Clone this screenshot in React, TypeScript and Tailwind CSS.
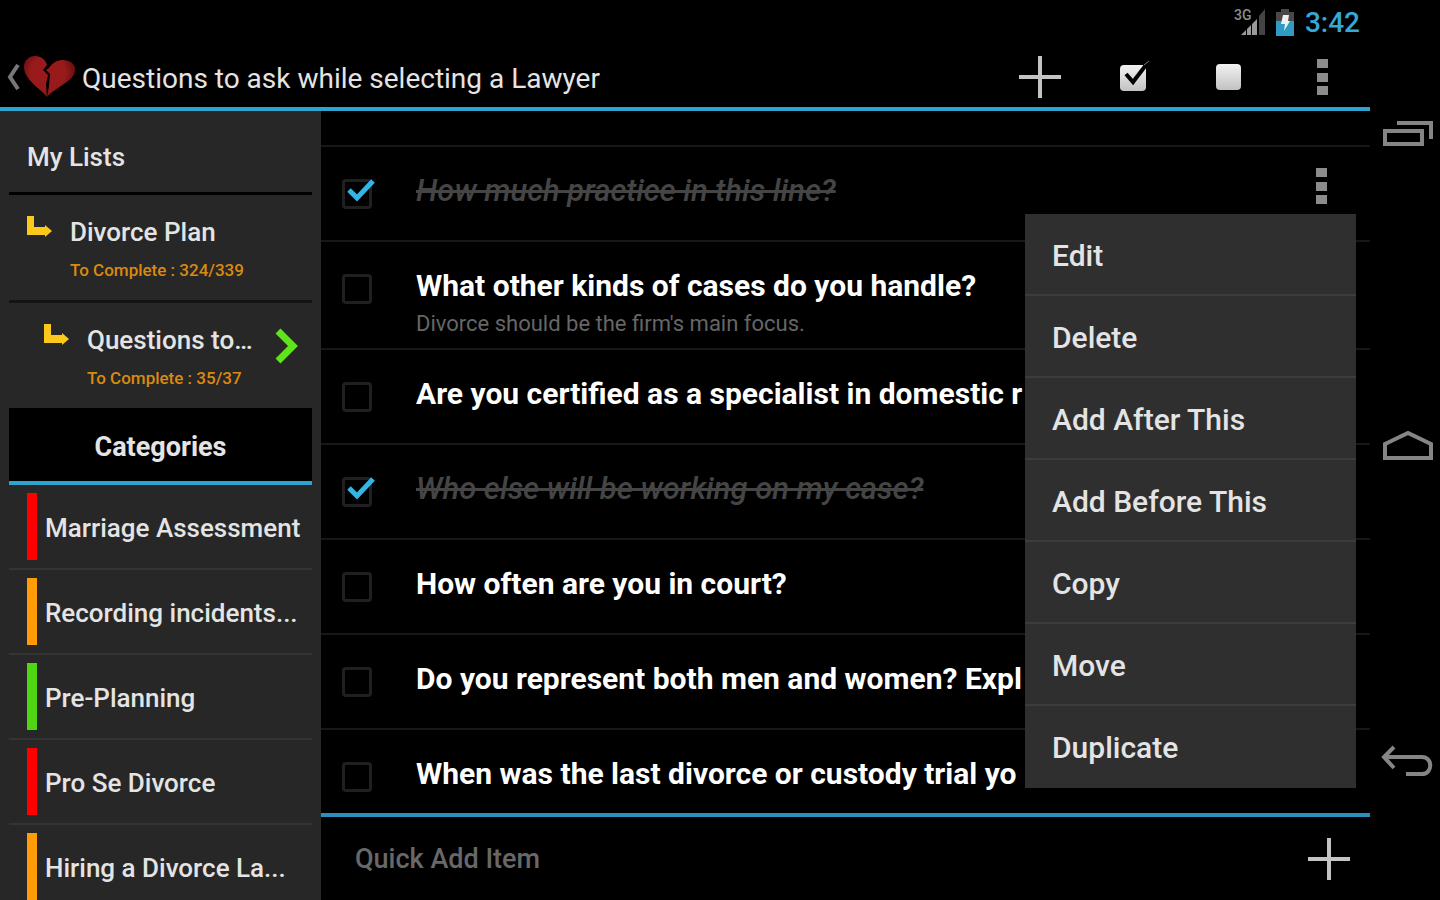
type Item = {
  id: string,
  title: string,
  note?: string,
  done?: boolean,
  menu?: boolean,
}

type Category = {
  name: string,
  color: string,
}

const items: Array<Item> = [
  { id: 'practice', title: 'How much practice in this line?', done: true, menu: true },
  { id: 'kinds', title: 'What other kinds of cases do you handle?', note: 'Divorce should be the firm\'s main focus.' },
  { id: 'certified', title: 'Are you certified as a specialist in domestic r' },
  { id: 'team', title: 'Who else will be working on my case?', done: true },
  { id: 'court', title: 'How often are you in court?' },
  { id: 'represent', title: 'Do you represent both men and women? Expl' },
  { id: 'trial', title: 'When was the last divorce or custody trial yo' },
]

const categories: Array<Category> = [
  { name: 'Marriage Assessment', color: 'bg-[#ff0000]' },
  { name: 'Recording incidents...', color: 'bg-[#ff9c08]' },
  { name: 'Pre-Planning', color: 'bg-[#4fd512]' },
  { name: 'Pro Se Divorce', color: 'bg-[#ff0000]' },
  { name: 'Hiring a Divorce La...', color: 'bg-[#ff9c08]' },
]

const actions = ['Edit', 'Delete', 'Add After This', 'Add Before This', 'Copy', 'Move', 'Duplicate']

const PlusIcon = () => (
  <svg width="42" height="42" viewBox="0 0 42 42" fill="none" stroke="#c4c4c4" strokeWidth="4">
    <path d="M21 0v42M0 21h42" />
  </svg>
)

const MoreIcon = () => (
  <svg width="12" height="38" viewBox="0 0 12 38" fill="#8c8c8c">
    <path d="M0 1h11v9H0zM0 15h11v9H0zM0 28h11v9H0z" />
  </svg>
)

const BackIcon = () => (
  <svg width="14" height="26" viewBox="0 0 14 26" fill="none" stroke="#777" strokeWidth="4">
    <path d="M12 1L4 13l8 12" />
  </svg>
)

const HeartIcon = () => (
  <svg width="52" height="42" viewBox="0 0 52 42">
    <defs>
      <radialGradient id="heart" gradientUnits="userSpaceOnUse" cx="24" cy="17" r="29">
        <stop offset="0.6" stopColor="#981a1b" />
        <stop offset="1" stopColor="#5e0d0f" />
      </radialGradient>
    </defs>
    <path fill="url(#heart)" d="M23 41C17 33 0 24 0 11C0 4 5 0 11 0C17 0 22 4 23 9L19 14L24 19L22 28L23 41Z" />
    <path fill="url(#heart)" d="M23 41L25 30L26 18L22 14L25 12C29 6 34 4 39 4C47 4 52 9 51 15C50 25 32 31 23 41Z" />
  </svg>
)

const CheckAllIcon = () => (
  <svg width="30" height="32" viewBox="0 0 30 32" fill="none">
    <defs>
      <linearGradient id="box" x1="0" y1="0" x2="0" y2="1">
        <stop stopColor="#f2f2f2" />
        <stop offset="1" stopColor="#c2c2c2" />
      </linearGradient>
    </defs>
    <rect x="0" y="4" width="26" height="26" rx="4" fill="url(#box)" />
    <path d="M6 13l7 8L26 4" stroke="#000" strokeWidth="4" />
    <path d="M24 4l5-4" stroke="#777" strokeWidth="1" />
  </svg>
)

const UncheckAllIcon = () => (
  <svg width="25" height="26" viewBox="0 0 25 26">
    <rect width="25" height="26" rx="4" fill="url(#box)" />
  </svg>
)

const BranchIcon = () => (
  <svg width="25" height="22" viewBox="0 0 25 22" fill="#fbc81c">
    <path d="M0 0h7v11h11V9l7 6-7 6v-2H0z" />
  </svg>
)

const ArrowIcon = () => (
  <svg width="24" height="36" viewBox="0 0 24 36" fill="none" stroke="#5fe31b" strokeWidth="7">
    <path d="M3 3l15 15L3 33" />
  </svg>
)

const SignalIcon = () => (
  <svg width="32" height="28" viewBox="0 0 32 28">
    <text x="0" y="12" fill="#8c8c8c" fontSize="14" fontWeight="500" fontFamily="Roboto, sans-serif">3G</text>
    <path fill="#9a9a9a" d="M7 27l5-5v5zM13 21l4-4v10h-4zM18 16l5-5v16h-5z" />
    <path fill="#444" d="M25 8l6-7v26h-6z" />
  </svg>
)

const BatteryIcon = () => (
  <svg width="18" height="27" viewBox="0 0 18 27">
    <path fill="#484848" d="M5 0h8v3h5v10H0V3h5z" />
    <path fill="#2f9ac4" d="M0 12h18v15H0z" />
    <path fill="#f0f0f0" d="M7 6h6l-1 6h2l-6 10 1-7H5z" />
  </svg>
)

const RecentIcon = () => (
  <svg width="50" height="27" viewBox="0 0 50 27" fill="none" stroke="#858585" strokeWidth="4">
    <path d="M2 11h37v13H2z" />
    <path d="M14 3h34v16" />
  </svg>
)

const HomeIcon = () => (
  <svg width="50" height="32" viewBox="0 0 50 32" fill="none" stroke="#858585" strokeWidth="4">
    <path d="M2 14L25 3l23 11v14H2z" />
  </svg>
)

const ReturnIcon = () => (
  <svg width="54" height="34" viewBox="0 0 54 34" fill="none" stroke="#858585" strokeWidth="4">
    <path d="M5 13h38c11 0 11 17 0 17H27" />
    <path d="M15 3L5 13l10 11" />
  </svg>
)

const ActionMenu = () => (
  <ul role="menu" className="absolute top-[67px] right-[14px] z-10 w-[331px] bg-[#2f2f2f]">
    {actions.map((action) => (
      <li key={action} role="none" className="border-b-2 border-[#3c3c3c] last:border-transparent">
        <button type="button" role="menuitem" className="flex h-[80px] w-full items-center px-[27px] pt-[2px] text-left text-[30px]">{action}</button>
      </li>
    ))}
  </ul>
)

const ListItem = ({ id, title, note, done, menu }: Item) => (
  <li className={`relative flex items-start border-b-2 border-[#171717] pr-[42px] pl-[21px] ${note ? 'h-[108px]' : 'h-[95px]'}`}>
    <div className="relative mt-8 h-[30px] w-[30px] shrink-0">
      <input id={id} type="checkbox" defaultChecked={done} className="peer block h-[30px] w-[30px] appearance-none rounded-sm border-[3px] border-[#202020]" />
      <svg className="pointer-events-none absolute top-0 left-[5px] hidden peer-checked:block" width="28" height="24" viewBox="0 0 28 24" fill="none" stroke="#35b5e5" strokeWidth="5">
        <path d="M2 11l8 8L26 2" />
      </svg>
    </div>
    <div className="ml-11 flex-1 overflow-hidden pt-[26px] whitespace-nowrap">
      <label htmlFor={id} className={`block h-9 leading-9 ${done ? 'text-[31px] text-[#454545] italic line-through' : 'text-[30px] font-bold text-white'}`}>{title}</label>
      {note && <p className="pt-[2px] text-[22px] leading-9 font-normal text-[#666]">{note}</p>}
    </div>
    {menu && (
      <>
        <button type="button" aria-label="Item actions" className="mt-5"><MoreIcon /></button>
        <ActionMenu />
      </>
    )}
  </li>
)

const Sidebar = () => (
  <aside className="w-[321px] shrink-0 overflow-hidden bg-[#272727] pr-[9px] pl-[9px]">
    <h2 className="flex h-[84px] items-center border-b-[3px] border-black px-[18px] pt-3 text-[26px]">My Lists</h2>
    <a href="#plan" className="flex h-[108px] items-start border-b-[3px] border-[#141414] pt-[21px] pl-[18px]">
      <BranchIcon />
      <span className="ml-[18px]">
        <span className="block text-[26px] leading-8">Divorce Plan</span>
        <span className="block pt-[6px] text-[17px] leading-8 text-[#d98a10]">To Complete : 324/339</span>
      </span>
    </a>
    <a href="#questions" className="flex h-[105px] items-start pt-[21px] pl-[35px]">
      <BranchIcon />
      <span className="ml-[18px] flex-1">
        <span className="block text-[26px] leading-8">Questions to…</span>
        <span className="block pt-[6px] text-[17px] leading-8 text-[#d98a10]">To Complete : 35/37</span>
      </span>
      <span className="mt-1 mr-[13px]"><ArrowIcon /></span>
    </a>
    <h2 className="flex h-[77px] items-center justify-center border-b-4 border-[#2fa3d0] bg-black pt-[6px] text-[27px] font-bold">Categories</h2>
    <ul>
      {categories.map(({ name, color }) => (
        <li key={name} className="border-b-2 border-[#343434]">
          <a href="#category" className="flex h-[83px] items-center pl-[18px]">
            <span className={`h-[67px] w-[10px] ${color}`} />
            <span className="pt-1 pl-2 text-[26px] whitespace-nowrap">{name}</span>
          </a>
        </li>
      ))}
    </ul>
  </aside>
)

const App = () => (
  <div className="flex h-screen overflow-hidden bg-black font-[Roboto,sans-serif] font-medium text-[#e4e4e4]">
    <div className="flex min-w-0 flex-1 flex-col">
      <div className="flex h-11 items-center justify-end pr-[10px]">
        <SignalIcon />
        <span className="ml-[10px]"><BatteryIcon /></span>
        <span className="ml-[11px] pt-[2px] text-[28px] text-[#34a9d8]">3:42</span>
      </div>
      <header className="flex h-[67px] shrink-0 items-center border-b-4 border-[#2fa3d0] pt-[3px] pr-[41px] pl-[6px]">
        <a href="#back" aria-label="Back" className="flex items-center gap-1">
          <BackIcon />
          <HeartIcon />
        </a>
        <h1 className="flex-1 pt-[3px] pl-[6px] text-[28px] font-normal whitespace-nowrap">Questions to ask while selecting a Lawyer</h1>
        <button type="button" aria-label="Add item"><PlusIcon /></button>
        <button type="button" aria-label="Check all" className="ml-[59px]"><CheckAllIcon /></button>
        <button type="button" aria-label="Uncheck all" className="ml-[66px]"><UncheckAllIcon /></button>
        <button type="button" aria-label="More options" className="ml-[76px]"><MoreIcon /></button>
      </header>
      <div className="flex min-h-0 flex-1">
        <Sidebar />
        <main className="flex min-w-0 flex-1 flex-col">
          <ul className="min-h-0 flex-1 overflow-hidden">
            <li className="h-9 border-b-2 border-[#171717]" />
            {items.map((item) => <ListItem key={item.id} {...item} />)}
          </ul>
          <form className="flex h-[87px] shrink-0 items-center border-t-4 border-[#2a8fb9] pr-5 pl-[34px]">
            <input type="text" aria-label="Quick Add Item" placeholder="Quick Add Item" className="min-w-0 flex-1 bg-transparent pt-[2px] text-[27px] placeholder:text-[#686868]" />
            <button type="button" aria-label="Add"><PlusIcon /></button>
          </form>
        </main>
      </div>
    </div>
    <nav className="flex w-[70px] shrink-0 flex-col items-end justify-between pt-[120px] pr-[7px] pb-[122px]">
      <button type="button" aria-label="Recent apps"><RecentIcon /></button>
      <button type="button" aria-label="Home"><HomeIcon /></button>
      <button type="button" aria-label="Back"><ReturnIcon /></button>
    </nav>
  </div>
)

export default App
